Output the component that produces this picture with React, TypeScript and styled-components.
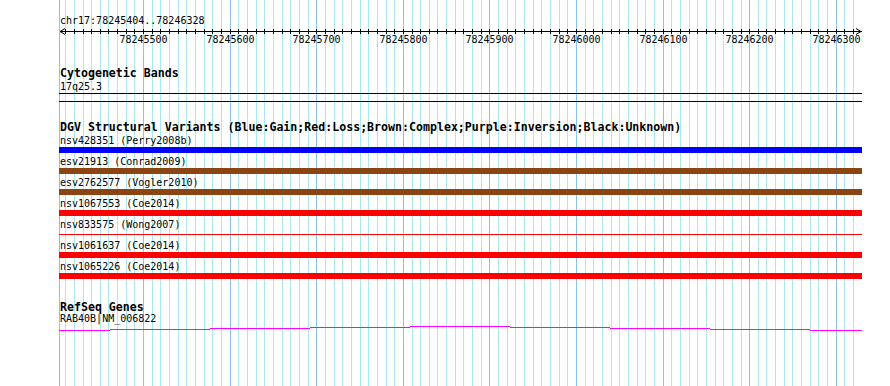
import styled, { createGlobalStyle } from "styled-components";

const START = 78245404;
const END = 78246328;
const LEFT = 60;
const SCALE = 800 / (END - START);
const TRACK_LEFT = 59;
const TRACK_WIDTH = 803;

const toX = (bp: number) => LEFT + (bp - START) * SCALE;

type Variant = {
  name: string;
  color: string;
  thin?: boolean;
};

const variants: Variant[] = [
  { name: "nsv428351 (Perry2008b)", color: "#0000ff" },
  { name: "esv21913 (Conrad2009)", color: "#8b4513" },
  { name: "esv2762577 (Vogler2010)", color: "#8b4513" },
  { name: "nsv1067553 (Coe2014)", color: "#ff0000" },
  { name: "nsv833575 (Wong2007)", color: "#ff0000", thin: true },
  { name: "nsv1061637 (Coe2014)", color: "#ff0000" },
  { name: "nsv1065226 (Coe2014)", color: "#ff0000" },
];

const ticks: number[] = [];
for (let bp = START - (START % 10) + 10; bp <= END; bp += 10) ticks.push(bp);

// gene line steps (page x, y)
const geneSteps = [
  [59, 110, 330],
  [110, 210, 329],
  [210, 310, 328],
  [310, 410, 327],
  [410, 510, 326],
  [510, 610, 327],
  [610, 710, 328],
  [710, 810, 329],
  [810, 862, 330],
];

function App() {
  return (
    <>
      <GlobalStyle />
      <Page>
        <Grid width={890} height={386}>
          <line x1={59.5} y1={0} x2={59.5} y2={386} stroke="#88c4ec" />
          {ticks.map((bp) => {
            const x = Math.round(toX(bp)) + 0.5;
            return (
              <line
                key={bp}
                x1={x}
                y1={0}
                x2={x}
                y2={386}
                stroke={bp % 100 === 0 ? "#88c4ec" : "#aaeaee"}
              />
            );
          })}
        </Grid>
        <Tracks>
          <Location>chr17:78245404..78246328</Location>
          <Ruler width={TRACK_WIDTH} height={20}>
            <line x1={1} y1={5.5} x2={TRACK_WIDTH} y2={5.5} stroke="#000" />
            <polyline points="6,2.5 1,5.5 6,8.5" fill="none" stroke="#000" />
            <polyline
              points={`${TRACK_WIDTH - 6},2.5 ${TRACK_WIDTH - 1},5.5 ${TRACK_WIDTH - 6},8.5`}
              fill="none"
              stroke="#000"
            />
            {ticks.map((bp) => {
              const x = Math.round(toX(bp)) - TRACK_LEFT + 0.5;
              return (
                <g key={bp}>
                  <line x1={x} y1={3} x2={x} y2={8} stroke="#000" />
                  {bp % 100 === 0 && (
                    <RulerLabel x={x} y={17} textAnchor="middle">
                      {bp}
                    </RulerLabel>
                  )}
                </g>
              );
            })}
          </Ruler>

          <TrackTitle $top={21}>Cytogenetic Bands</TrackTitle>
          <FeatureLabel $top={3}>17q25.3</FeatureLabel>
          <Band />

          <TrackTitle $top={19}>
            DGV Structural Variants
            (Blue:Gain;Red:Loss;Brown:Complex;Purple:Inversion;Black:Unknown)
          </TrackTitle>
          <VariantList>
            {variants.map((v) => (
              <VariantRow key={v.name}>
                <FeatureLabel>{v.name}</FeatureLabel>
                <BarSlot>
                  <Bar $color={v.color} $thin={v.thin} />
                </BarSlot>
              </VariantRow>
            ))}
          </VariantList>

          <TrackTitle $top={18}>RefSeq Genes</TrackTitle>
          <FeatureLabel $top={1}>RAB40B|NM_006822</FeatureLabel>
          <GeneLine width={TRACK_WIDTH} height={10} shapeRendering="crispEdges">
            {geneSteps.map(([x1, x2, y]) => (
              <rect
                key={x1}
                x={x1 - TRACK_LEFT}
                y={y - 324}
                width={x2 - x1}
                height={1}
                fill="#ff00ff"
              />
            ))}
          </GeneLine>
        </Tracks>
      </Page>
    </>
  );
}

const GlobalStyle = createGlobalStyle`
  body {
    margin: 0;
    background: #ffffff;
    font-family: "DejaVu Sans Mono", "Liberation Mono", monospace;
  }
`;

const Page = styled.div`
  position: relative;
  width: 890px;
  height: 386px;
  overflow: hidden;
  background: #ffffff;
`;

const Grid = styled.svg`
  position: absolute;
  left: 0;
  top: 0;
`;

const Tracks = styled.div`
  position: relative;
  display: flex;
  flex-direction: column;
  width: ${TRACK_WIDTH}px;
  padding: 16px 0 0 ${TRACK_LEFT}px;
`;

const Location = styled.div`
  padding-left: 1px;
  font-size: 10px;
  line-height: 10px;
  height: 10px;
  color: #000;
  white-space: nowrap;
`;

const Ruler = styled.svg`
  display: block;
`;

const RulerLabel = styled.text`
  font-family: "DejaVu Sans Mono", "Liberation Mono", monospace;
  font-size: 10px;
  fill: #000;
`;

const TrackTitle = styled.div<{ $top: number }>`
  margin-top: ${(p) => p.$top}px;
  padding-left: 1px;
  font-size: 11.6px;
  line-height: 12px;
  height: 12px;
  font-weight: bold;
  color: #000;
  white-space: nowrap;
`;

const FeatureLabel = styled.div<{ $top?: number }>`
  margin-top: ${(p) => p.$top ?? 0}px;
  padding-left: 1px;
  font-size: 10px;
  line-height: 10px;
  height: 10px;
  color: #000;
  white-space: nowrap;
`;

const Band = styled.div`
  height: 7px;
  margin-top: 1px;
  border-top: 1px solid #000;
  border-bottom: 1px solid #000;
`;

const VariantList = styled.div`
  display: flex;
  flex-direction: column;
  margin-top: 3px;
`;

const VariantRow = styled.div`
  display: flex;
  flex-direction: column;
  height: 21px;
`;

const BarSlot = styled.div`
  display: flex;
  align-items: center;
  height: 6px;
  margin-top: 1px;
`;

const Bar = styled.div<{ $color: string; $thin?: boolean }>`
  width: 100%;
  height: ${(p) => (p.$thin ? 1 : 6)}px;
  background: ${(p) => p.$color};
`;

const GeneLine = styled.svg`
  display: block;
`;

export default App;
